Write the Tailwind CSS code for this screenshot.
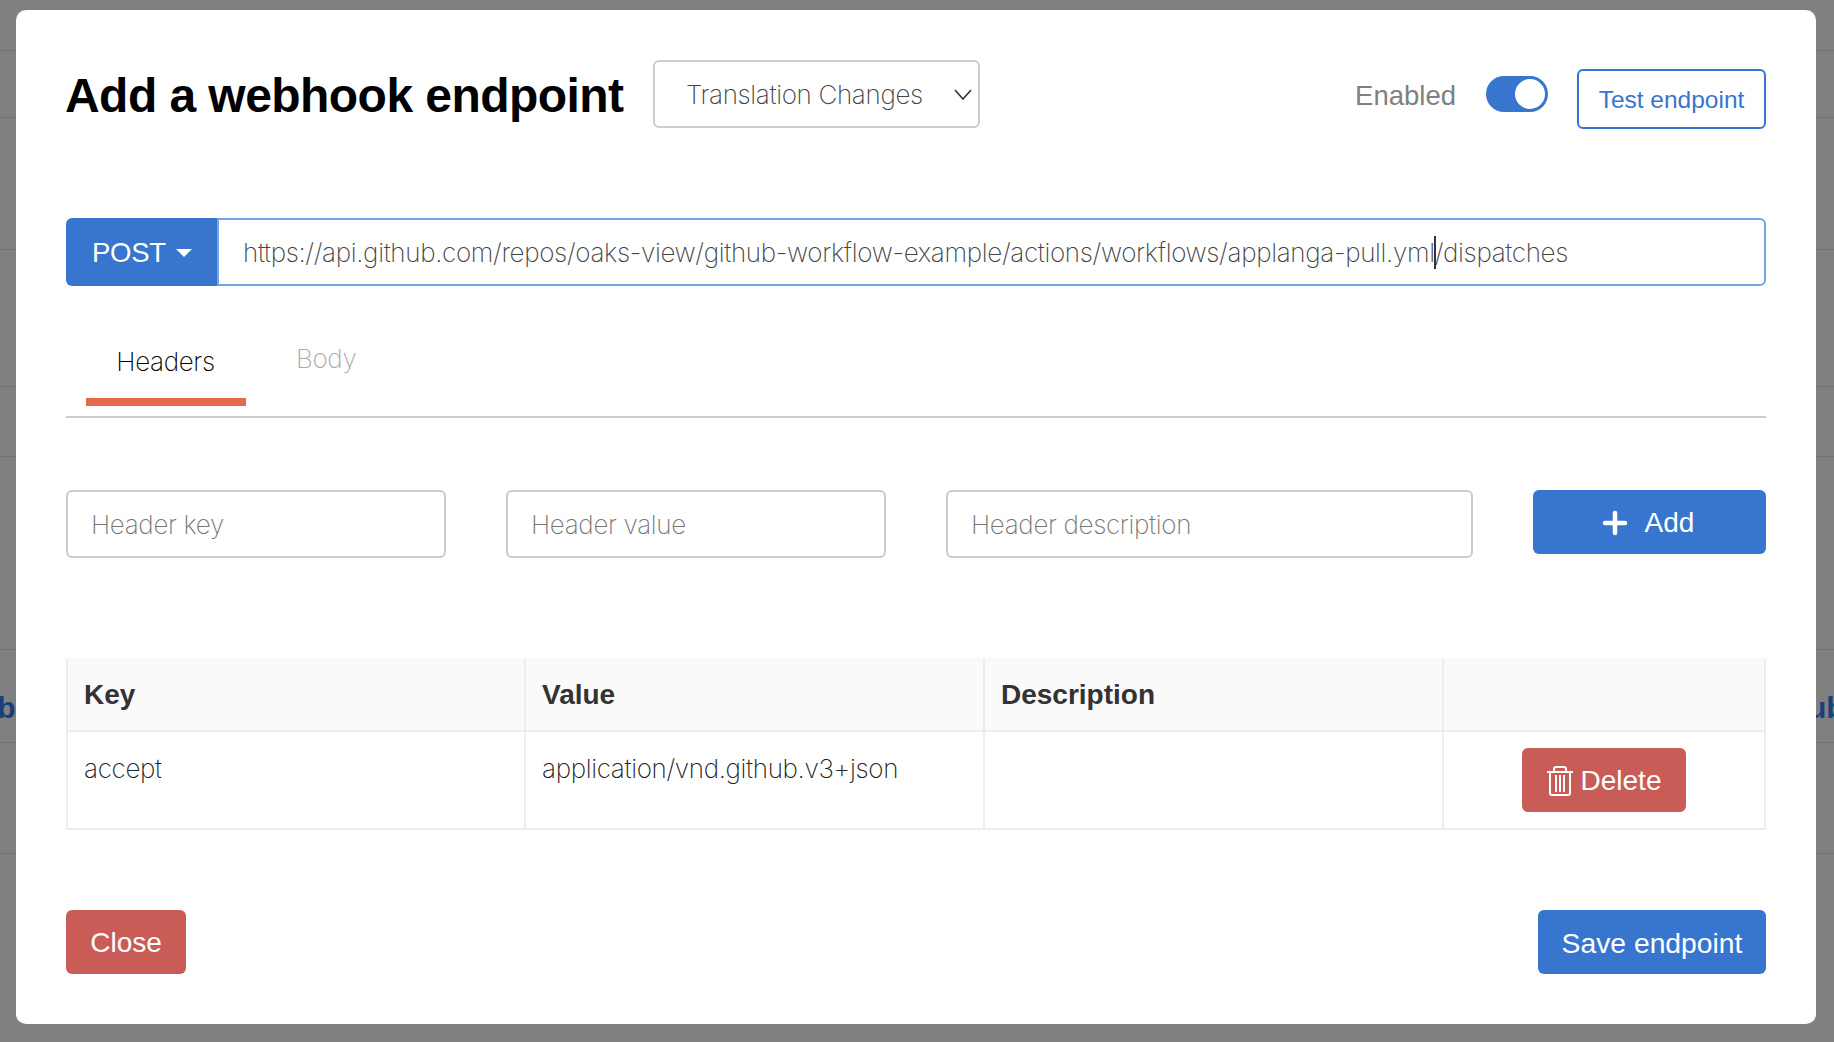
<!DOCTYPE html>
<html><head><meta charset="utf-8"><script src="https://cdn.jsdelivr.net/npm/@tailwindcss/browser@4"></script></head>
<body class="m-0 bg-[#808080] font-['Liberation_Sans',sans-serif] overflow-hidden">
<div class="relative h-[1042px] w-[1834px] overflow-hidden">
  <div class="flex flex-col">
    <div class="h-[51px] border-b border-[#727272]"></div>
    <div class="h-[67px] border-b border-[#727272]"></div>
    <div class="h-[132px] border-b border-[#727272]"></div>
    <div class="h-[137px] border-b border-[#727272]"></div>
    <div class="h-[70px] border-b border-[#727272]"></div>
    <div class="h-[193px] border-b border-[#727272]"></div>
    <div class="h-[93px] border-b border-[#727272]"></div>
    <div class="h-[111px] border-b border-[#727272]"></div>
  </div>
  <span class="absolute left-[-21px] top-[685px] text-[30px] font-bold text-[#1a3f7a]">ub</span>
  <span class="absolute left-[1808px] top-[685px] text-[30px] font-bold text-[#1a3f7a]">ub</span>

  <div class="absolute left-4 top-[10px] flex h-[1014px] w-[1800px] flex-col rounded-[10px] bg-white px-[50px] pt-[50px]">
    <div class="flex h-[68px] items-center">
      <h1 class="m-0 mt-[3px] ml-[-1px] w-[588px] text-[48px] leading-none font-bold tracking-[-0.55px] text-black">Add a webhook endpoint</h1>
      <div class="flex h-[68px] w-[327px] items-center justify-between rounded-[6px] border-2 border-[#cccccc] pr-[5px] pl-[31px]">
        <span class="font-['Inter',sans-serif] text-[26px] font-extralight tracking-[-0.34px] text-[#444444]">Translation Changes</span>
        <svg width="20" height="12" viewBox="0 0 20 12" fill="none" stroke="#333" stroke-width="1.6"><path d="M2 2l8 9 8-9"/></svg>
      </div>
      <span class="mt-[3px] ml-auto text-[27.5px] text-[#808080]">Enabled</span>
      <div class="ml-[30px] flex h-[36px] w-[62px] items-center justify-end rounded-full bg-[#3875ce] pr-[3px]"><span class="h-[30px] w-[30px] rounded-full bg-white"></span></div>
      <button class="mt-[9px] ml-[29px] h-[60px] w-[189px] rounded-[6px] border-2 border-[#3875ce] bg-white pt-[3px] text-[24.500px] text-[#3875ce]">Test endpoint</button>
    </div>

    <div class="mt-[90px] flex h-[68px]">
      <div class="flex w-[151px] items-center gap-[10px] rounded-l-[6px] bg-[#3875ce] pt-[1px] pl-[26px] text-[27.500px] tracking-[-0.3px] text-white">POST<svg width="16" height="8" viewBox="0 0 16 8" fill="#fff"><path d="M0 0h16L8 8z"/></svg></div>
      <div class="flex flex-1 items-center rounded-r-[6px] border-2 border-[#73a5e0] pl-[24px] font-['Inter',sans-serif] text-[26px] font-extralight tracking-[-0.34px] text-[#444444]"><span>https://api.github.com/repos/oaks-view/github-workflow-example/actions/workflows/applanga-pull.yml<span class="relative"><span class="absolute top-[-1px] left-[-1px] h-[33px] w-[2px] bg-[#333333]"></span></span>/dispatches</span></div>
    </div>

    <div class="mt-[50px] ml-[20px] flex">
      <div class="h-[70px] w-[160px] border-b-8 border-[#e5694a] pt-[6px] pr-[1px] text-center font-['Inter',sans-serif] text-[26px] font-extralight tracking-[-0.34px] text-[#000000]">Headers</div>
      <div class="ml-[50px] pt-[3px] font-['Inter',sans-serif] text-[26px] font-extralight tracking-[-0.34px] text-[#aaaaaa]">Body</div>
    </div>
    <div class="mt-[10px] h-[2px] bg-[#cccccc]"></div>

    <div class="mt-[72px] flex items-start gap-[60px]">
      <div class="flex h-[68px] w-[380px] items-center rounded-[6px] border-2 border-[#cccccc] pl-[23px] font-['Inter',sans-serif] text-[26px] font-extralight tracking-[-0.34px] text-[#777777]">Header key</div>
      <div class="flex h-[68px] w-[380px] items-center rounded-[6px] border-2 border-[#cccccc] pl-[23px] font-['Inter',sans-serif] text-[26px] font-extralight tracking-[-0.34px] text-[#777777]">Header value</div>
      <div class="flex h-[68px] w-[527px] items-center rounded-[6px] border-2 border-[#cccccc] pl-[23px] font-['Inter',sans-serif] text-[26px] font-extralight tracking-[-0.34px] text-[#777777]">Header description</div>
      <button class="flex h-[64px] w-[233px] items-center justify-center gap-[17px] rounded-[6px] bg-[#3875ce] pt-[1px] pr-[3px] text-[28px] text-white"><svg width="26" height="26" viewBox="0 0 26 26" stroke="#fff" stroke-width="4.5" stroke-linecap="round"><path d="M13 3v20M3 13h20"/></svg>Add</button>
    </div>

    <table class="mt-[100px] w-[1698px] table-fixed border-collapse text-[#333333]">
      <colgroup><col class="w-[458px]"><col class="w-[459px]"><col class="w-[459px]"><col class="w-[322px]"></colgroup>
      <thead><tr class="h-[73px] bg-[#fafafa] text-left text-[28px]">
        <th class="border-x-2 border-b-2 border-[#ededed] pt-[2px] pl-[16px] font-bold">Key</th>
        <th class="border-x-2 border-b-2 border-[#ededed] pt-[2px] pl-[16px] font-bold">Value</th>
        <th class="border-x-2 border-b-2 border-[#ededed] pt-[2px] pl-[16px] font-bold">Description</th>
        <th class="border-x-2 border-b-2 border-[#ededed]"></th>
      </tr></thead>
      <tbody class="font-['Inter',sans-serif] text-[26px] font-extralight tracking-[-0.34px]"><tr class="h-[98px]">
        <td class="border-2 border-[#ededed] pt-[17px] pl-[16px] align-top text-[#222222]">accept</td>
        <td class="border-2 border-[#ededed] pt-[17px] pl-[16px] align-top text-[#222222]">application/vnd.github.v3+json</td>
        <td class="border-2 border-[#ededed]"></td>
        <td class="border-2 border-[#ededed] text-center"><button class="inline-flex h-[64px] w-[164px] items-center justify-center gap-[8px] rounded-[6px] bg-[#c95c56] pt-[1px] font-['Liberation_Sans',sans-serif] text-[28px] font-normal tracking-normal text-white"><svg width="26" height="30" viewBox="0 0 26 30" fill="none" stroke="#fff" stroke-width="2"><path d="M0 6h26M7 5V3q0-2 2-2h8q2 0 2 2v2M3 6v21q0 2 2 2h16q2 0 2-2V6M9 9v17M13 9v17M17 9v17"/></svg>Delete</button></td>
      </tr></tbody>
    </table>

    <div class="mt-[80px] flex justify-between">
      <button class="h-[64px] w-[120px] rounded-[6px] bg-[#c95c56] pt-[2px] text-[28px] text-white">Close</button>
      <button class="h-[64px] w-[228px] rounded-[6px] bg-[#3875ce] pt-[2px] text-[28.300px] text-white">Save endpoint</button>
    </div>
  </div>
</div>
</body></html>
